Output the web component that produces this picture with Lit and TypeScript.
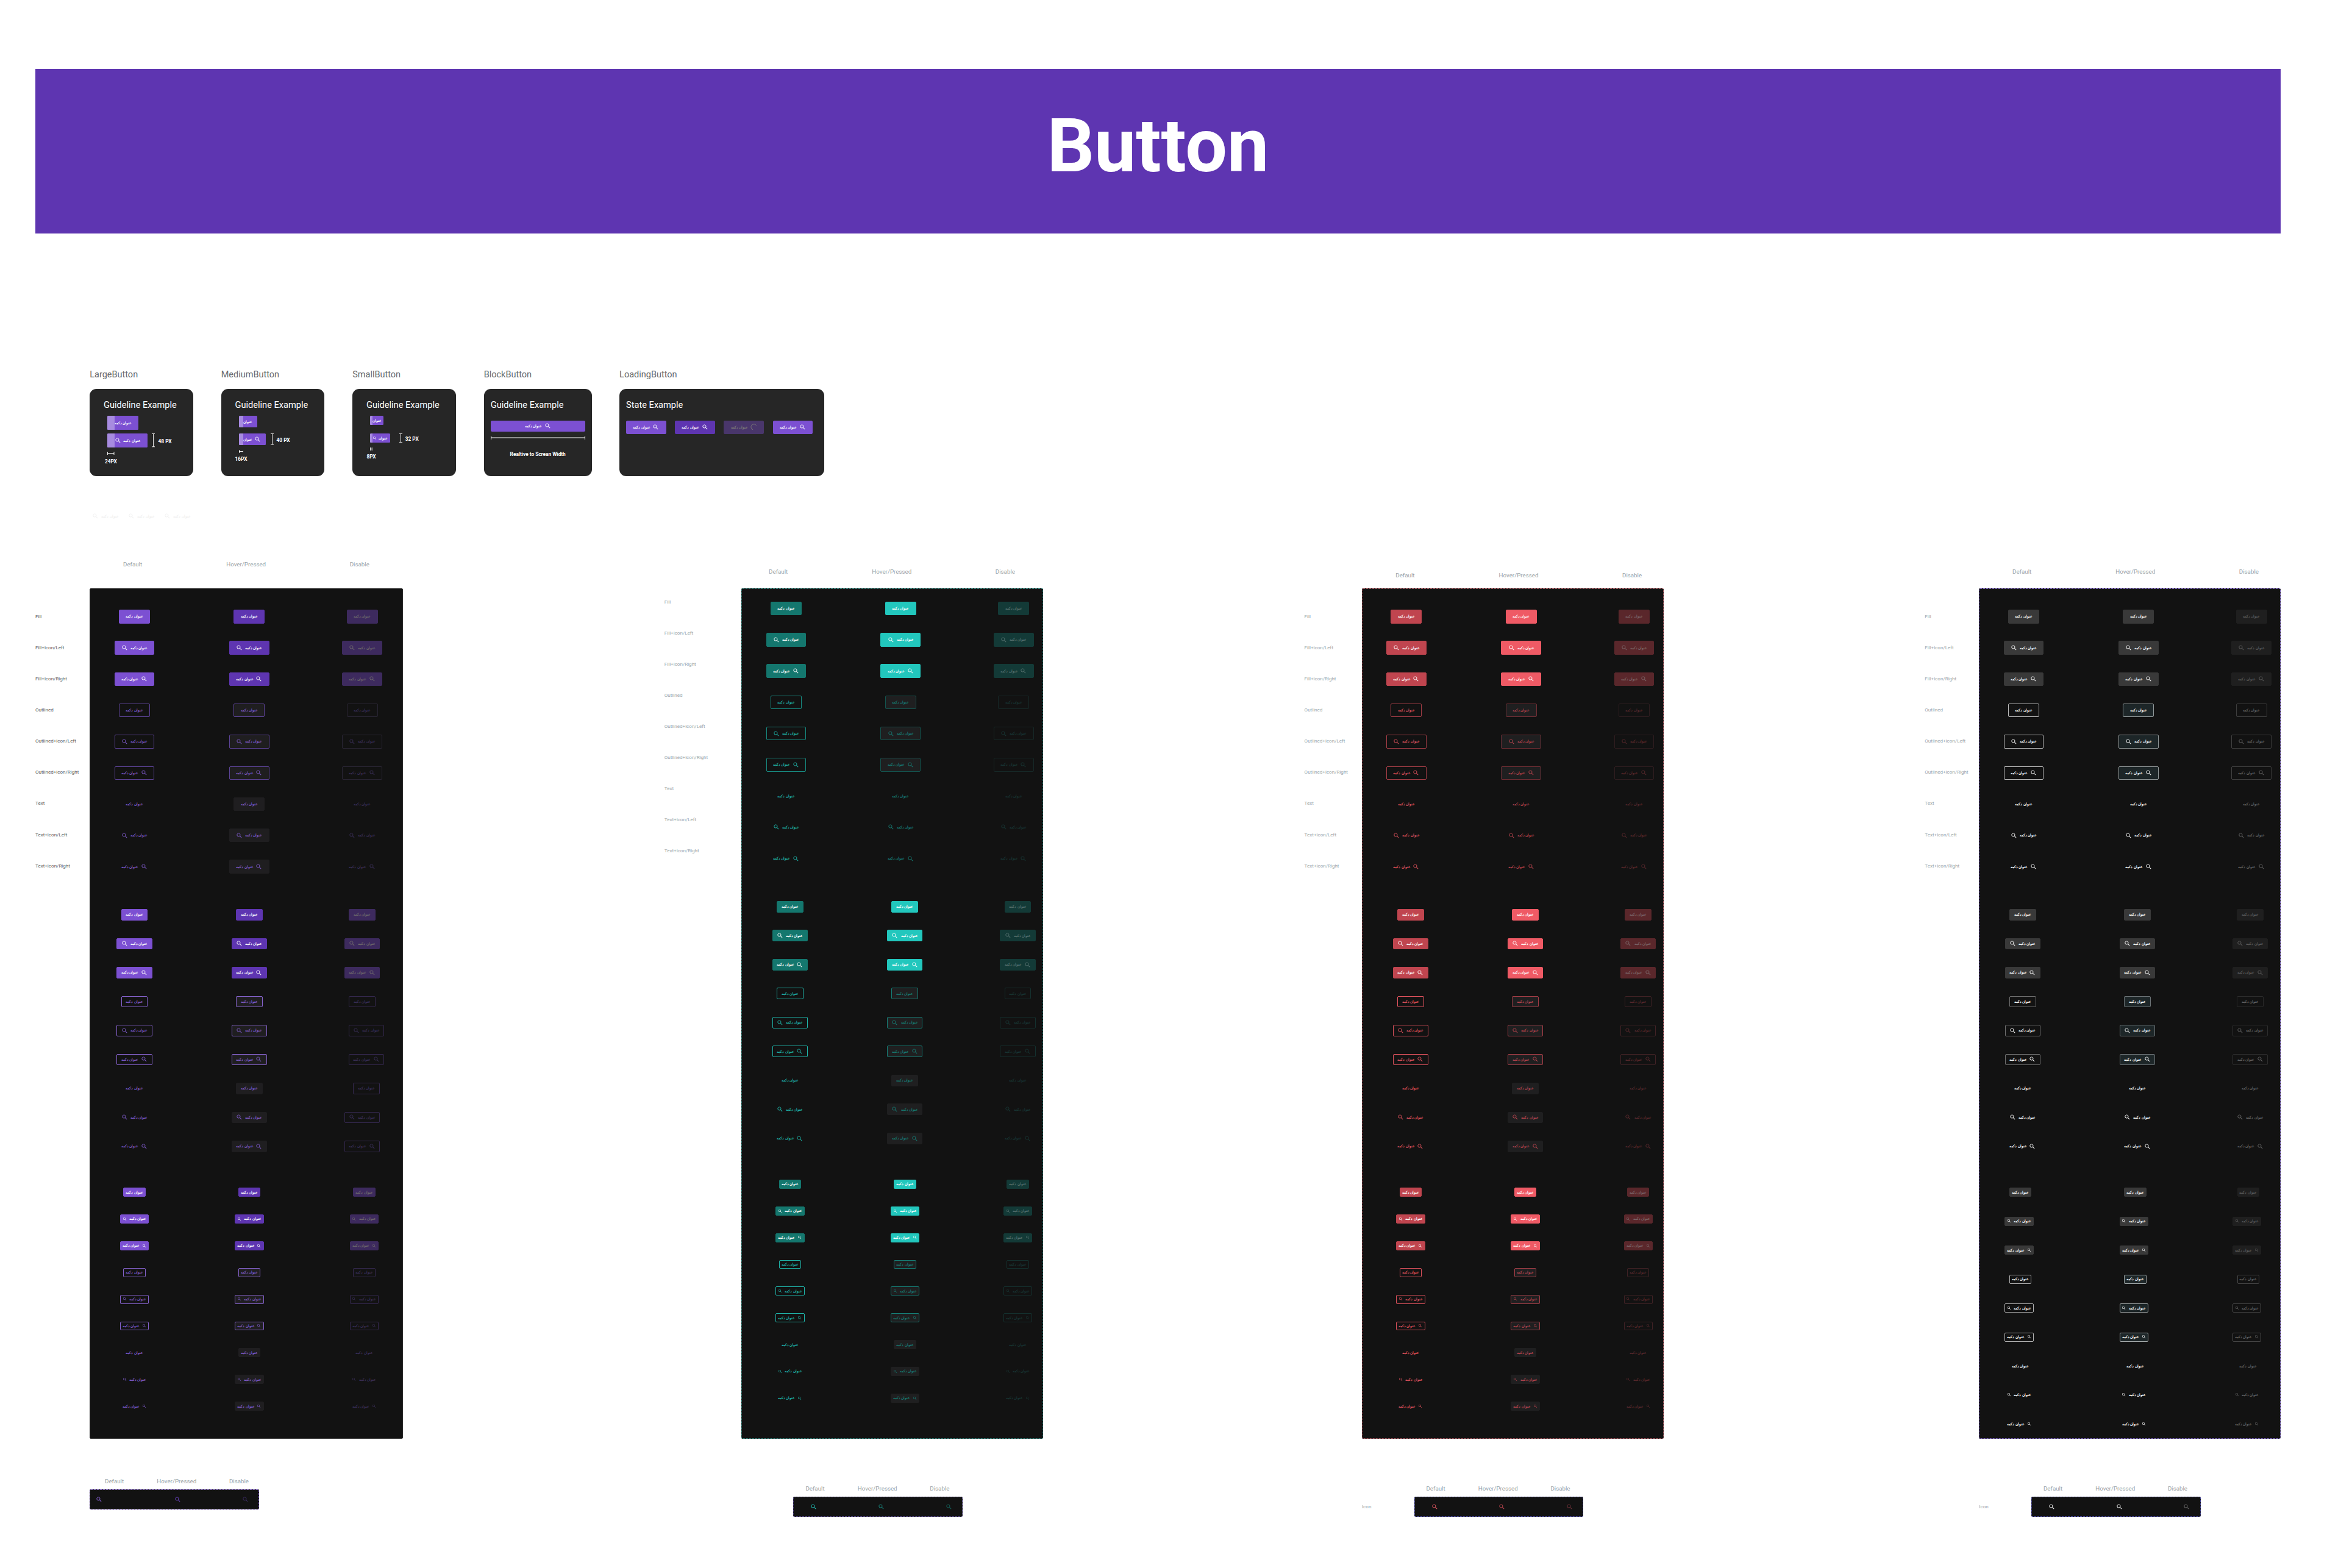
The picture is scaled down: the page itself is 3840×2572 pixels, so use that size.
import { LitElement, html, css, svg, nothing } from "lit";
import { customElement, property } from "lit/decorators.js";
import { classMap } from "lit/directives/class-map.js";
import { styleMap } from "lit/directives/style-map.js";

type Size = "large" | "medium" | "small";
type Kind = "fill" | "outlined" | "text";
type Side = "none" | "left" | "right";
type Trio = [string, string, string];

const CAPTION = "عنوان دکمه";
const SHORT_CAPTION = "عنوان";
const STATES = ["Default", "Hover/Pressed", "Disable"];
const KINDS: Kind[] = ["fill", "outlined", "text"];
const SIDES: Side[] = ["none", "left", "right"];
const ROWS = KINDS.flatMap((kind) => SIDES.map((side) => ({ kind, side })));
const ROW_LABELS = [
  "Fill",
  "Fill+icon/Left",
  "Fill+icon/Right",
  "Outlined",
  "Outlined+icon/Left",
  "Outlined+icon/Right",
  "Text",
  "Text+icon/Left",
  "Text+icon/Right",
];

interface Block {
  size: Size;
  gap: number;
  pitch: number;
  /** centres of the three state columns, from the panel's left edge */
  centers: [number, number, number];
  /** horizontal nudge for rows that carry an icon */
  iconShift?: number;
}

interface Theme {
  name: string;
  labels: string;
  labelWidth: number;
  labelTop: number;
  width: number;
  headTop: number;
  headStart: number;
  blocks: Block[];
  fill: Trio;
  fillInk: Trio;
  ink: Trio;
  lineThin: Trio;
  line: Trio;
  lineSmall?: Trio;
  hoverBg: string;
  textHover: Size[];
  border: string;
  strip: {
    label: boolean;
    top: number;
    left: number;
    headStart: number;
    icons: [number, number, number];
    colors: Trio;
    border: string;
  };
}

const STRIP_ICONS: [number, number, number] = [33.9, 144.5, 255.1];

const THEMES: Theme[] = [
  {
    name: "primary",
    labels: "#5a5d61",
    labelWidth: 89.3,
    labelTop: 21.2,
    width: 513.4,
    headTop: 4,
    headStart: 70.3,
    blocks: [
      { size: "large", gap: 21.1, pitch: 51.27, centers: [73.3, 261.5, 446.8] },
      { size: "medium", gap: 29.6, pitch: 47.5, centers: [73.2, 261.6, 446.8] },
      { size: "small", gap: 29.4, pitch: 43.9, centers: [73.2, 261.7, 450.1] },
    ],
    fill: ["#7c50d2", "#5e35b1", "#3d2a5e"],
    fillInk: ["#ffffff", "#ffffff", "#6f6a6c"],
    ink: ["#7f5bcb", "#7f5bcb", "#3a2f58"],
    lineThin: ["#5c4396", "#5c4396", "#292533"],
    line: ["#8562cc", "#8562cc", "#34284e"],
    hoverBg: "#1f1e20",
    textHover: ["large", "medium", "small"],
    border: "1px solid #2b2b2b",
    strip: {
      label: false,
      top: 2443.3,
      left: 0,
      headStart: 40.3,
      icons: [15.8, 144.6, 255.1],
      colors: ["#8a63d8", "#7146cc", "#3d2d66"],
      border: "#6b4bb0",
    },
  },
  {
    name: "teal",
    labels: "#9aa6aa",
    labelWidth: 126.1,
    labelTop: -3,
    width: 494.7,
    headTop: 16,
    headStart: 60.8,
    blocks: [
      { size: "large", gap: 7.8, pitch: 51.27, centers: [73.5, 261.4, 447] },
      { size: "medium", gap: 29.6, pitch: 47.5, centers: [80, 268.4, 453.7] },
      { size: "small", gap: 29.6, pitch: 43.87, centers: [80, 268.6, 453.7] },
    ],
    fill: ["#14776e", "#22c7bd", "#133a37"],
    fillInk: ["#ffffff", "#ffffff", "#56706e"],
    ink: ["#1fb3a8", "#167a72", "#183634"],
    lineThin: ["#178a81", "#13534e", "#162827"],
    line: ["#1fb3a8", "#157e76", "#14302e"],
    hoverBg: "#1f1f20",
    textHover: ["medium", "small"],
    border: "1px dashed #1d6f69",
    strip: {
      label: false,
      top: 2455,
      left: 85.3,
      headStart: 35.8,
      icons: STRIP_ICONS,
      colors: ["#22c7bd", "#178a81", "#14665f"],
      border: "#4c3f80",
    },
  },
  {
    name: "red",
    labels: "#9aa6aa",
    labelWidth: 94.3,
    labelTop: 21.2,
    width: 494.7,
    headTop: 21.8,
    headStart: 71,
    blocks: [
      { size: "large", gap: 21.1, pitch: 51.27, centers: [73, 261.4, 446.7] },
      { size: "medium", gap: 29.6, pitch: 47.5, centers: [80, 268.3, 453.4] },
      { size: "small", gap: 29.4, pitch: 43.9, centers: [80, 268.3, 453.4] },
    ],
    fill: ["#c0454f", "#ef5a65", "#5a272b"],
    fillInk: ["#ffffff", "#ffffff", "#7b6668"],
    ink: ["#e0525d", "#b9444e", "#5a292d"],
    lineThin: ["#a33d46", "#6f2e34", "#2e1d1f"],
    line: ["#e0525d", "#a33d46", "#402225"],
    hoverBg: "#1f1f20",
    textHover: ["medium", "small"],
    border: "1px dashed #94444b",
    strip: {
      label: true,
      top: 2455,
      left: 85.7,
      headStart: 35.5,
      icons: STRIP_ICONS,
      colors: ["#ef5a65", "#c94853", "#73323a"],
      border: "#3f3f96",
    },
  },
  {
    name: "neutral",
    labels: "#9aa6aa",
    labelWidth: 89,
    labelTop: 21.2,
    width: 494.3,
    headTop: 16,
    headStart: 70.4,
    blocks: [
      { size: "large", gap: 21.1, pitch: 51.27, centers: [73.3, 261.7, 446.8] },
      { size: "medium", gap: 29.6, pitch: 47.5, centers: [71.5, 259.8, 444.9] },
      { size: "small", gap: 27.6, pitch: 47.5, centers: [67.8, 256.1, 441.4], iconShift: -2 },
    ],
    fill: ["#393939", "#393939", "#1f1f1f"],
    fillInk: ["#ffffff", "#ffffff", "#5c5c5c"],
    ink: ["#ffffff", "#ffffff", "#646464"],
    lineThin: ["#b9b9b9", "#8f9697", "#3e3e3e"],
    line: ["#6f6f6f", "#6b7275", "#2c2c2c"],
    lineSmall: ["#b0b0b0", "#a3a9aa", "#444444"],
    hoverBg: "#1d2628",
    textHover: [],
    border: "1px dashed #6a52b0",
    strip: {
      label: true,
      top: 2455,
      left: 85.7,
      headStart: 35.6,
      icons: STRIP_ICONS,
      colors: ["#ffffff", "#ffffff", "#6e6e6e"],
      border: "#3f3f96",
    },
  },
];

const SEARCH = svg`<path fill="currentColor" d="M15.5 14h-.79l-.28-.27C15.41 12.59 16 11.11 16 9.5 16 5.91 13.09 3 9.5 3S3 5.91 3 9.5 5.91 16 9.5 16c1.61 0 3.09-.59 4.23-1.57l.27.28v.79l5 4.99L20.49 19l-4.99-5zm-6 0C7.01 14 5 11.99 5 9.5S7.01 5 9.5 5 14 7.01 14 9.5 11.99 14 9.5 14z"/>`;
const SPINNER = svg`<path fill="none" stroke="currentColor" stroke-width="2" d="M9 21A10 10 0 1 1 21 7"/>`;

@customElement("ui-icon")
class UiIcon extends LitElement {
  static styles = css`
    :host {
      display: block;
      flex: none;
      width: 11.2px;
      height: 11.2px;
    }
    :host([compact]) {
      width: 7.45px;
      height: 7.45px;
    }
    .glyph {
      display: block;
      width: 100%;
      height: 100%;
    }
  `;
  @property() name = "search";
  render() {
    return html`<svg class="glyph" viewBox="0 0 24 24">${this.name === "spinner" ? SPINNER : SEARCH}</svg>`;
  }
}

@customElement("ui-button")
class UiButton extends LitElement {
  static styles = css`
    :host {
      display: block;
      flex: none;
    }
    .button {
      box-sizing: border-box;
      display: flex;
      align-items: center;
      justify-content: center;
      gap: 3.7px;
      border: 1px solid transparent;
      border-radius: 2px;
      overflow: hidden;
    }
    .right {
      flex-direction: row-reverse;
    }
    .large {
      height: 22.4px;
      width: 51px;
    }
    .large.icon {
      width: 65.6px;
    }
    .medium {
      height: 18.7px;
      width: 43.6px;
    }
    .medium.icon {
      width: 58.3px;
    }
    .small {
      height: 14.9px;
      width: 36.3px;
    }
    .small.icon {
      width: 47.4px;
    }
    .caption {
      flex: none;
      width: 28.7px;
      font: 700 5.6px/10px Roboto, sans-serif;
      text-align: center;
      white-space: nowrap;
      direction: rtl;
    }
    .button.wide {
      width: 155px;
      height: 18.4px;
    }
  `;
  @property() size: Size = "large";
  @property() side: Side = "none";
  @property() icon = "search";
  @property() bg = "transparent";
  @property() ink = "#fff";
  @property() line = "transparent";
  @property({ type: Boolean }) wide = false;

  render() {
    const classes = {
      button: true,
      [this.size]: true,
      icon: this.side !== "none",
      right: this.side === "right",
      wide: this.wide,
    };
    const colors = {
      background: this.bg,
      color: this.ink,
      borderColor: this.line === "transparent" ? this.bg : this.line,
    };
    return html`<div class=${classMap(classes)} style=${styleMap(colors)}>
      ${this.side === "none"
        ? nothing
        : html`<ui-icon name=${this.icon} ?compact=${this.size === "small"}></ui-icon>`}
      <span class="caption">${CAPTION}</span>
    </div>`;
  }
}

@customElement("guide-card")
class GuideCard extends LitElement {
  static styles = css`
    :host {
      display: block;
      font-family: Roboto, sans-serif;
      color: #fff;
    }
    .body {
      display: flex;
      flex-direction: column;
      align-items: flex-start;
      padding-left: 6.2px;
    }
    .demo {
      display: flex;
      align-items: center;
      background: #7c50d2;
      border-radius: 1.5px;
      overflow: hidden;
      box-sizing: border-box;
    }
    .pad {
      align-self: stretch;
      flex: none;
      background: #a78be0;
    }
    .caption {
      flex: none;
      font: 700 5.6px/10px Roboto, sans-serif;
      text-align: center;
      white-space: nowrap;
      direction: rtl;
    }
    .first {
      display: flex;
      align-items: flex-start;
      height: 29px;
    }
    .second {
      display: flex;
      align-items: flex-start;
    }
    .rule {
      display: block;
      flex: none;
    }
    .px {
      font-weight: 700;
      font-size: 8.3px;
      line-height: 10px;
      white-space: nowrap;
    }
    .under {
      display: block;
      margin-top: 7.5px;
    }
    .value {
      margin-top: 5.4px;
      text-align: center;
    }
  `;
  @property() size: Size = "large";

  render() {
    const spec = {
      large: { pad: 11.5, h: 22.3, plain: 51, full: 65.4, text: CAPTION, tw: 28.7, side: "left", gap: 7.7, px: "48 PX", bottom: "24PX", tail: 5.3 },
      medium: { pad: 7.8, h: 18.6, plain: 29.9, full: 44.6, text: SHORT_CAPTION, tw: 14.7, side: "right", gap: 7.3, px: "40 PX", bottom: "16PX", tail: 5 },
      small: { pad: 3.7, h: 14.9, plain: 22.1, full: 32.8, text: SHORT_CAPTION, tw: 14.7, side: "left", gap: 14.7, px: "32 PX", bottom: "8PX", tail: 5 },
    }[this.size];
    const caption = html`<span class="caption" style=${styleMap({ width: `${spec.tw}px` })}>${spec.text}</span>`;
    const icon = html`<ui-icon
      ?compact=${this.size === "small"}
      style=${styleMap({ margin: spec.side === "left" ? "0 3.2px 0 0" : "0 0 0 3.2px" })}
    ></ui-icon>`;
    const pad = html`<span class="pad" style=${styleMap({ width: `${spec.pad}px` })}></span>`;
    const h = spec.h;
    const w = spec.pad;
    return html`<div class="body">
      <div class="first">
        <div class="demo" style=${styleMap({ width: `${spec.plain}px`, height: `${h}px` })}>${pad}${caption}</div>
      </div>
      <div class="second">
        <div class="demo" style=${styleMap({ width: `${spec.full}px`, height: `${h}px` })}>
          ${pad}${spec.side === "left" ? html`${icon}${caption}` : html`${caption}${icon}`}
        </div>
        <svg class="rule" style=${styleMap({ marginLeft: `${spec.gap}px` })} width="5" height=${h} viewBox="0 0 5 ${h}">
          <path stroke="#fff" stroke-width="0.9" fill="none" d="M0 .5H5M2.5 .5V${h - 0.5}M0 ${h - 0.5}H5" />
        </svg>
        <span class="px" style=${styleMap({ marginLeft: `${spec.tail}px`, paddingTop: `${h / 2 - 4}px` })}>${spec.px}</span>
      </div>
      <svg class="under" width=${w} height="5" viewBox="0 0 ${w} 5">
        <path stroke="#fff" stroke-width="0.9" fill="none" d="M.5 0V5M.5 2.5H${w - 0.5}M${w - 0.5} 0V5" />
      </svg>
      <div class="px value" style=${styleMap({ width: "36px", marginLeft: `${w / 2 - 18}px` })}>${spec.bottom}</div>
    </div>`;
  }
}

@customElement("theme-board")
class ThemeBoard extends LitElement {
  static styles = css`
    :host {
      display: block;
      font-family: Roboto, sans-serif;
    }
    .heads {
      display: flex;
      box-sizing: border-box;
      height: 49.6px;
    }
    .head {
      flex: none;
      width: 80px;
      text-align: center;
      font-size: 9.75px;
      line-height: 14px;
      color: #98a2a6;
    }
    .head + .head {
      margin-left: 106.1px;
    }
    .main {
      display: flex;
      height: 1395.4px;
    }
    .labels {
      flex: none;
    }
    .label {
      height: 51.1px;
      line-height: 51.1px;
      font-size: 8.05px;
      white-space: nowrap;
    }
    .panel {
      box-sizing: border-box;
      flex: none;
      background: #121212;
      border-radius: 2px;
    }
    .row {
      display: flex;
      align-items: center;
    }
    .cell {
      flex: none;
      width: 100px;
      display: flex;
      justify-content: center;
    }
    .foot {
      display: flex;
      align-items: flex-end;
    }
    .icon-label {
      flex: none;
      line-height: 32px;
      font-size: 8.05px;
    }
    .strip-heads {
      display: flex;
      height: 20px;
    }
    .strip-heads .head + .head {
      margin-left: 22.2px;
    }
    .strip {
      box-sizing: border-box;
      display: flex;
      align-items: center;
      width: 277.8px;
      height: 32.5px;
      background: #121212;
      border-radius: 2px;
    }
  `;
  @property({ attribute: false }) theme!: Theme;

  private cell(block: Block, kind: Kind, side: Side, state: number, index: number) {
    const t = this.theme;
    let shown = kind;
    let shift = side !== "none" ? block.iconShift ?? 0 : 0;
    // The primary medium set keeps an outline on its disabled text buttons.
    if (t.name === "primary" && block.size === "medium" && state === 2) {
      if (kind === "text") shown = "outlined";
      if (index >= 4 && index <= 6) shift = 7;
    }
    const lines = block.size === "large" ? t.lineThin : block.size === "small" && t.lineSmall ? t.lineSmall : t.line;
    let bg = "transparent";
    if (shown === "fill") bg = t.fill[state];
    else if (state === 1 && (shown === "outlined" || t.textHover.includes(block.size))) bg = t.hoverBg;
    const c = block.centers;
    const margin = (state === 0 ? c[0] - 50 - 1 : c[state] - c[state - 1] - 100) + "px";
    return html`<div class="cell" style=${styleMap({ marginLeft: margin })}>
      <ui-button
        style=${styleMap({ transform: shift ? `translateX(${shift}px)` : "none" })}
        size=${block.size}
        side=${side}
        .bg=${bg}
        .ink=${shown === "fill" ? t.fillInk[state] : t.ink[state]}
        .line=${shown === "outlined" ? lines[state] : "transparent"}
      ></ui-button>
    </div>`;
  }

  render() {
    const t = this.theme;
    const s = t.strip;
    return html`
      <div
        class="heads"
        style=${styleMap({ paddingTop: `${t.headTop}px`, paddingLeft: `${t.labelWidth + t.headStart - 40}px` })}
      >
        ${STATES.map((x) => html`<span class="head">${x}</span>`)}
      </div>
      <div class="main">
        <div class="labels" style=${styleMap({ width: `${t.labelWidth}px`, color: t.labels, marginTop: `${t.labelTop}px` })}>
          ${ROW_LABELS.map((x) => html`<div class="label">${x}</div>`)}
        </div>
        <div class="panel" style=${styleMap({ width: `${t.width}px`, border: t.border })}>
          ${t.blocks.map(
            (b, n) => html`<div style=${styleMap({ paddingTop: `${n ? b.gap : b.gap - 1}px` })}>
              ${ROWS.map(
                (r, i) => html`<div class="row" style=${styleMap({ height: `${b.pitch}px` })}>
                  ${[0, 1, 2].map((state) => this.cell(b, r.kind, r.side, state, i))}
                </div>`,
              )}
            </div>`,
          )}
        </div>
      </div>
      <div class="foot" style=${styleMap({ paddingTop: `${s.top - 20 - 2360}px`, paddingLeft: `${t.labelWidth}px` })}>
        <div class="icon-label" style=${styleMap({ width: `${s.left}px`, color: t.labels })}>${s.label ? "Icon" : nothing}</div>
        <div>
          <div class="strip-heads" style=${styleMap({ marginLeft: `${s.headStart - 40}px` })}>
            ${STATES.map((x) => html`<span class="head">${x}</span>`)}
          </div>
          <div class="strip" style=${styleMap({ border: `1px dashed ${s.border}` })}>
            ${s.icons.map((x, i) => {
              const before = i ? s.icons[i - 1] + 5.6 : 1;
              return html`<ui-icon style=${styleMap({ marginLeft: `${x - 5.6 - before}px`, color: s.colors[i] })}></ui-icon>`;
            })}
          </div>
        </div>
      </div>
    `;
  }
}

@customElement("app-root")
class AppRoot extends LitElement {
  static styles = css`
    :host {
      display: block;
      box-sizing: border-box;
      width: 3840px;
      height: 2572px;
      padding: 112.6px 0 0 58px;
      overflow: hidden;
      background: #fff;
      font-family: Roboto, sans-serif;
    }
    .banner {
      display: flex;
      align-items: center;
      justify-content: center;
      box-sizing: border-box;
      width: 3682.6px;
      height: 270.5px;
      padding-bottom: 16px;
      background: #5e35b1;
      color: #fff;
      font-size: 121.8px;
      font-weight: 700;
      line-height: 140px;
    }
    .cards {
      display: flex;
      padding: 220.9px 0 0 89.2px;
      height: 177.7px;
    }
    .group {
      flex: none;
    }
    .name {
      height: 33.8px;
      font-size: 14.5px;
      line-height: 22px;
      color: #66696c;
    }
    .card {
      box-sizing: border-box;
      height: 143.5px;
      border-radius: 11px;
      background: #262626;
      color: #fff;
      padding: 15.7px 0 0 22.8px;
    }
    .flush {
      padding-left: 11px;
    }
    .title {
      height: 29px;
      font-size: 14.6px;
      line-height: 22px;
      white-space: nowrap;
    }
    .w169 {
      width: 169.5px;
      margin-right: 46px;
    }
    .w177 {
      width: 177px;
      margin-right: 45.4px;
    }
    .w336 {
      width: 336.4px;
    }
    .states {
      display: flex;
      gap: 14.6px;
      padding-top: 7.2px;
    }
    .block {
      padding-top: 7.2px;
      width: 155px;
    }
    .span {
      display: block;
      margin-top: 6.6px;
    }
    .note {
      margin-top: 19.4px;
      text-align: center;
      font-size: 8.3px;
      line-height: 10px;
      font-weight: 700;
    }
    .ghosts {
      display: flex;
      height: 19.6px;
      padding: 54px 0 0 82.2px;
    }
    .ghosts ui-button {
      margin-right: -6.6px;
    }
    .boards {
      display: grid;
      grid-template-columns: 1031.8px 1049.8px 1017.7px 583.3px;
      margin-top: 59.8px;
    }
  `;

  render() {
    const guides: [string, Size][] = [
      ["LargeButton", "large"],
      ["MediumButton", "medium"],
      ["SmallButton", "small"],
    ];
    return html`
      <div class="banner">Button</div>
      <div class="cards">
        ${guides.map(
          ([name, size]) => html`<div class="group w169">
            <div class="name">${name}</div>
            <div class="card">
              <div class="title">Guideline Example</div>
              <guide-card size=${size}></guide-card>
            </div>
          </div>`,
        )}
        <div class="group w177">
          <div class="name">BlockButton</div>
          <div class="card flush">
            <div class="title">Guideline Example</div>
            <div class="block">
              <ui-button wide size="medium" side="right" bg="#7c50d2"></ui-button>
              <svg class="span" width="155" height="6" viewBox="0 0 155 6">
                <path stroke="#fff" stroke-width="1" fill="none" d="M.5 0V6M.5 3H154.5M154.5 0V6" />
              </svg>
              <div class="note">Realtive to Screan Width</div>
            </div>
          </div>
        </div>
        <div class="group w336">
          <div class="name">LoadingButton</div>
          <div class="card flush">
            <div class="title">State Example</div>
            <div class="states">
              <ui-button side="right" bg="#7c50d2"></ui-button>
              <ui-button side="right" bg="#5e35b1"></ui-button>
              <ui-button side="right" icon="spinner" bg="#49366b" ink="#7d7c78"></ui-button>
              <ui-button side="right" bg="#7c50d2"></ui-button>
            </div>
          </div>
        </div>
      </div>
      <div class="ghosts">
        ${[0, 1, 2].map(() => html`<ui-button size="large" side="left" ink="#f0f0f0"></ui-button>`)}
      </div>
      <div class="boards">${THEMES.map((t) => html`<theme-board .theme=${t}></theme-board>`)}</div>
    `;
  }
}
